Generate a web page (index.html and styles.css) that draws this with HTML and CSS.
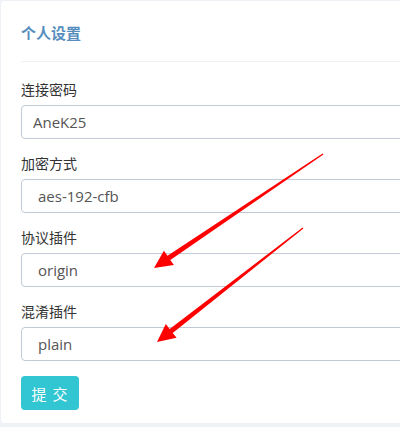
FILE: index.html
```html
<!DOCTYPE html>
<html lang="zh-CN">
<head>
<meta charset="utf-8">
<title>个人设置</title>
<link rel="stylesheet" href="styles.css">
</head>
<body>
<div class="page">
  <div class="portlet">
    <div class="portlet-title">
      <span class="caption">个人设置</span>
    </div>
    <form class="portlet-body">
      <div class="form-group">
        <label class="label">连接密码</label>
        <input class="form-control" type="text" value="AneK25">
      </div>
      <div class="form-group">
        <label class="label">加密方式</label>
        <select class="form-control select"><option>aes-192-cfb</option></select>
      </div>
      <div class="form-group">
        <label class="label">协议插件</label>
        <select class="form-control select"><option>origin</option></select>
      </div>
      <div class="form-group">
        <label class="label">混淆插件</label>
        <select class="form-control select"><option>plain</option></select>
      </div>
      <button class="btn" type="button">提 交</button>
    </form>
  </div>
  <svg class="arrows" width="400" height="427" viewBox="0 0 400 427">
    <polygon fill="#ff0000" points="322.6,153.4 167.5,255.8 163.9,250.8 154,268 173.9,265.0 170.3,260.0 323.4,154.6"/>
    <polygon fill="#ff0000" points="302.6,227.4 169.7,328.9 165.8,324.0 157,342 176.6,337.8 172.7,332.9 303.4,228.6"/>
  </svg>
</div>
</body>
</html>
```
FILE: styles.css
```css
html, body {
  margin: 0;
  padding: 0;
  overflow: hidden;
  background: #eef1f5;
}
body {
  width: 400px;
  height: 427px;
  font-family: "Open Sans", "Noto Sans CJK SC", sans-serif;
  font-size: 14px;
  color: #333;
}
.page {
  position: relative;
  padding: 1px 0 0 1px;
  width: 399px;
  height: 426px;
}
.portlet {
  width: 600px;
  background: #fff;
  border-radius: 4px;
  padding: 12px 20px 13px;
  box-sizing: border-box;
}
.portlet-title {
  height: 48px;
  border-bottom: 1px solid #eef1f5;
}
.caption {
  display: block;
  padding: 11px 0;
  line-height: 18px;
  font-size: 15px;
  font-weight: 700;
  color: #578ebe;
}
.portlet-body {
  display: flex;
  flex-direction: column;
  padding-top: 18px;
  margin: 0;
}
.form-group {
  display: flex;
  flex-direction: column;
  margin-bottom: 15px;
}
.label {
  line-height: 20px;
  margin-bottom: 5px;
  color: #333;
  font-size: 14px;
}
.form-control {
  height: 34px;
  box-sizing: border-box;
  border: 1px solid #c2cad8;
  border-radius: 4px;
  padding: 6px 11px;
  font-family: "Open Sans", "Noto Sans CJK SC", sans-serif;
  font-size: 15px;
  color: #555;
  background: #fff;
  outline: none;
  margin: 0;
}
.select {
  appearance: none;
  -webkit-appearance: none;
  padding-left: 16px;
}
.btn {
  align-self: flex-start;
  width: 58px;
  height: 34px;
  border: none;
  border-radius: 4px;
  background: #32c5d2;
  color: #fff;
  font-family: "Open Sans", "Noto Sans CJK SC", sans-serif;
  font-size: 15px;
  letter-spacing: 1px;
  padding: 0;
  margin: 0;
}
.arrows {
  position: absolute;
  left: 0;
  top: 0;
  pointer-events: none;
}
```
